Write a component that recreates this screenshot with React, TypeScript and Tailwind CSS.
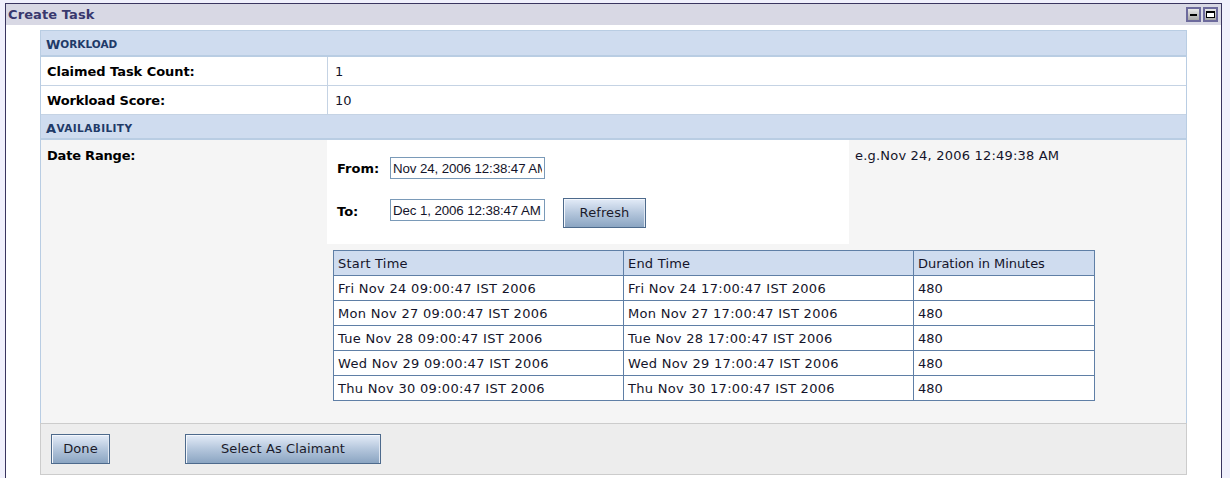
import React from "react";

const rows = [
  ["Fri Nov 24 09:00:47 IST 2006", "Fri Nov 24 17:00:47 IST 2006", "480"],
  ["Mon Nov 27 09:00:47 IST 2006", "Mon Nov 27 17:00:47 IST 2006", "480"],
  ["Tue Nov 28 09:00:47 IST 2006", "Tue Nov 28 17:00:47 IST 2006", "480"],
  ["Wed Nov 29 09:00:47 IST 2006", "Wed Nov 29 17:00:47 IST 2006", "480"],
  ["Thu Nov 30 09:00:47 IST 2006", "Thu Nov 30 17:00:47 IST 2006", "480"],
];

const btn =
  "h-[30px] border border-[#4d6a8c] bg-gradient-to-b from-[#e4ecf8] via-[#b4c6dc] to-[#8ba5c2] shadow-[inset_1px_1px_0_0_#f4f7fc,inset_-1px_0_0_0_#dfe7f2] text-[13px] text-[#1a1a2a] tracking-[0.1px] flex items-center justify-center";

function SectionHead({ first, rest, cls }: { first: string; rest: string; cls: string }) {
  return (
    <div className={"bg-[#cfdcef] border-b-2 border-[#b9cde3] pl-[5px] flex items-center font-bold text-[#1f3a68] " + cls}>
      <span className="text-[13px] leading-none">{first}</span>
      <span className="text-[10.5px] leading-none">{rest}</span>
    </div>
  );
}

function InfoRow({ label, value, cls }: { label: string; value: string; cls: string }) {
  return (
    <div className="h-[29px] flex bg-white border-b border-[#c5d3e4]">
      <div className={"w-[287px] shrink-0 pl-[6px] pt-[2px] flex items-center font-bold text-[13px] text-black border-r border-[#c5d3e4] " + cls}>
        {label}
      </div>
      <div className="pl-[7px] pt-[2px] flex items-center text-[13px] text-[#14142a]">{value}</div>
    </div>
  );
}

export default function App() {
  return (
    <div
      className="h-[478px] w-[1230px] overflow-hidden bg-[#f0f0fc] pt-[3px] pl-[5px] pr-[8px]"
      style={{ fontFamily: '"DejaVu Sans", sans-serif' }}
    >
      <div className="h-[475px] border-t border-l border-r border-[#39355f] bg-white">
        <div className="h-[21px] bg-[#d8d8e4] flex items-center justify-between pl-[2px] pr-[3px]">
          <span className="font-bold text-[13px] text-[#39386e] tracking-[0.1px]">Create Task</span>
          <div className="flex gap-[2px]">
            <div className="w-[15px] h-[15px] border-2 border-[#6c6a9c] bg-gradient-to-b from-[#e8e8e8] to-[#a8a8a8] flex items-center justify-center">
              <div className="w-[7px] h-[2px] bg-black" />
            </div>
            <div className="w-[15px] h-[15px] border-2 border-[#6c6a9c] bg-gradient-to-b from-[#e8e8e8] to-[#a8a8a8] flex items-center justify-center">
              <div className="w-[9px] h-[7px] border border-t-2 border-black bg-white" />
            </div>
          </div>
        </div>

        <div className="ml-[34px] mt-[5px] w-[1147px] border-t border-l border-r border-[#b9cde3]">
          <SectionHead first="W" rest="ORKLOAD" cls="h-[26px] pt-[2px]" />
          <InfoRow label="Claimed Task Count:" value="1" cls="tracking-[-0.05px]" />
          <InfoRow label="Workload Score:" value="10" cls="tracking-[-0.15px]" />
          <SectionHead first="A" rest="VAILABILITY" cls="h-[25px] pt-[3px] tracking-[0.4px]" />

          <div className="h-[283px] bg-[#f5f5f5] flex">
            <div className="w-[286px] shrink-0 pl-[6px] pt-[8px] font-bold text-[13px] text-black leading-[16px] tracking-[-0.2px]">
              Date Range:
            </div>
            <div className="flex-1 min-w-0">
              <div className="flex">
                <div className="w-[522px] h-[104px] bg-white pl-[10px] pt-[17px]">
                  <div className="flex items-start h-[22px]">
                    <span className="w-[53px] h-[22px] pt-[1px] flex items-center font-bold text-[13px] text-black">From:</span>
                    <input
                      readOnly
                      value="Nov 24, 2006 12:38:47 AM"
                      className="w-[155px] h-[22px] border border-[#7a9ab8] bg-white px-[2px] text-[13.3px] tracking-[-0.1px] text-[#14142a] outline-none"
                      style={{ fontFamily: '"Liberation Sans", sans-serif' }}
                    />
                  </div>
                  <div className="flex items-start h-[33px] mt-[16px]">
                    <span className="w-[53px] h-[22px] mt-[6px] flex items-center font-bold text-[13px] text-black">To:</span>
                    <input
                      readOnly
                      value="Dec 1, 2006 12:38:47 AM"
                      className="w-[155px] h-[22px] mt-[4px] border border-[#7a9ab8] bg-white px-[2px] text-[13.3px] tracking-[-0.1px] text-[#14142a] outline-none"
                      style={{ fontFamily: '"Liberation Sans", sans-serif' }}
                    />
                    <button className={btn + " w-[83px] ml-[18px] mt-[3px]"}>Refresh</button>
                  </div>
                </div>
                <div className="pl-[6px] pt-[8px] text-[13px] text-[#14142a] leading-[16px] tracking-[0.2px]">
                  e.g.Nov 24, 2006 12:49:38 AM
                </div>
              </div>

              <div className="ml-[6px] mt-[6px] w-[762px] border border-[#5f7fa6] border-b-0 text-[13px] text-[#14142a]">
                <div className="grid grid-cols-[290px_290px_1fr] h-[25px] bg-[#cfdcef] border-b border-[#5f7fa6]">
                  <div className="pl-[4px] pt-[2px] flex items-center border-r border-[#5f7fa6] tracking-[0.2px]">Start Time</div>
                  <div className="pl-[4px] pt-[2px] flex items-center border-r border-[#5f7fa6] tracking-[0.2px]">End Time</div>
                  <div className="pl-[4px] pt-[2px] flex items-center tracking-[-0.05px]">Duration in Minutes</div>
                </div>
                {rows.map((r) => (
                  <div key={r[0]} className="grid grid-cols-[290px_290px_1fr] h-[25px] bg-white border-b border-[#5f7fa6]">
                    <div className="pl-[4px] pt-[2px] flex items-center border-r border-[#5f7fa6] tracking-[0.3px]">{r[0]}</div>
                    <div className="pl-[4px] pt-[2px] flex items-center border-r border-[#5f7fa6] tracking-[0.3px]">{r[1]}</div>
                    <div className="pl-[4px] pt-[2px] flex items-center">{r[2]}</div>
                  </div>
                ))}
              </div>
            </div>
          </div>
        </div>

        <div className="ml-[34px] w-[1147px] h-[52px] bg-[#ededed] border border-[#cccccc] flex items-center pl-[10px]">
          <button className={btn + " w-[59px]"}>Done</button>
          <button className={btn + " w-[196px] ml-[75px]"}>Select As Claimant</button>
        </div>
      </div>
    </div>
  );
}
